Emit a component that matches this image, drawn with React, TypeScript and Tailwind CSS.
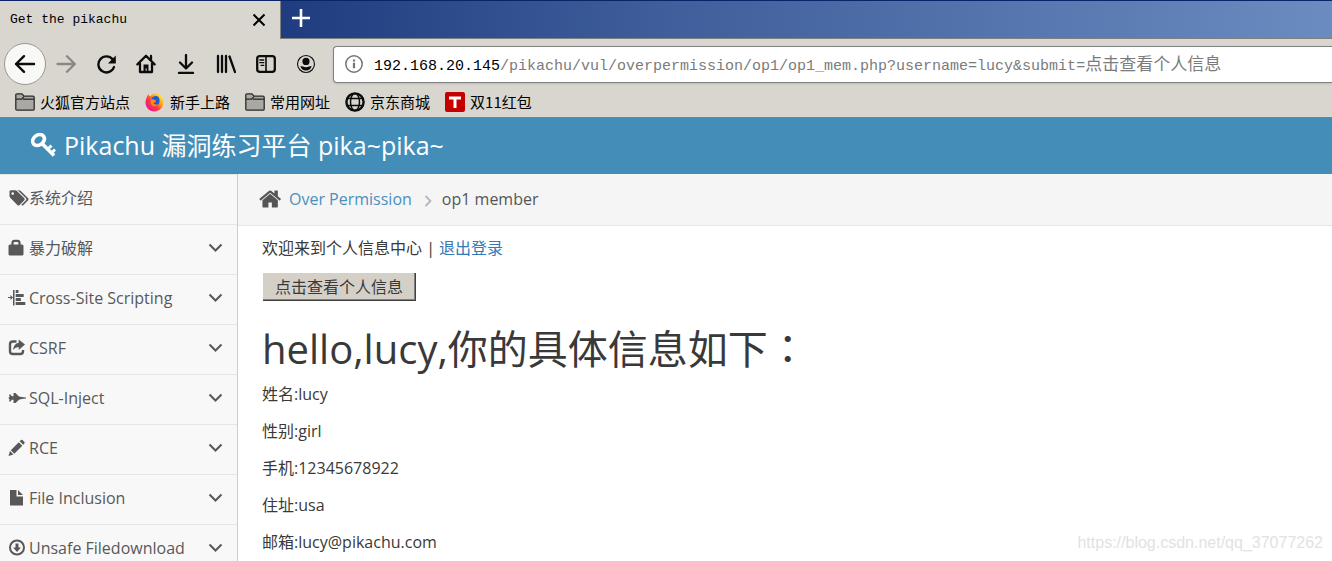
import type { ReactNode } from 'react';

const MENU: { label: string; icon: ReactNode; leaf?: boolean }[] = [
  { label: '系统介绍', icon: <TagsIcon />, leaf: true },
  { label: '暴力破解', icon: <LockIcon /> },
  { label: 'Cross-Site Scripting', icon: <AlignIcon /> },
  { label: 'CSRF', icon: <ShareIcon /> },
  { label: 'SQL-Inject', icon: <JetIcon /> },
  { label: 'RCE', icon: <PencilIcon /> },
  { label: 'File Inclusion', icon: <FileIcon /> },
  { label: 'Unsafe Filedownload', icon: <DownloadCircleIcon /> },
];

const BOOKMARKS = [
  { label: '火狐官方站点', icon: <FolderIcon /> },
  { label: '新手上路', icon: <FirefoxIcon /> },
  { label: '常用网址', icon: <FolderIcon /> },
  { label: '京东商城', icon: <GlobeIcon /> },
  { label: '双11红包', icon: <TmallIcon /> },
];

const MEMBER = [
  ['姓名', 'lucy'],
  ['性别', 'girl'],
  ['手机', '12345678922'],
  ['住址', 'usa'],
  ['邮箱', 'lucy@pikachu.com'],
];

export default function App() {
  return (
    <div className="relative flex h-screen flex-col overflow-hidden bg-white font-['Open_Sans','Noto_Sans_CJK_SC',sans-serif] text-base text-[#393939]">
      <BrowserChrome />
      <header className="flex h-14 shrink-0 items-center gap-2 bg-[#438eb9] px-[30px] pb-0.5 text-white">
        <KeyIcon />
        <a href="#" className="text-[25px] leading-8">Pikachu 漏洞练习平台 pika~pika~</a>
      </header>
      <div className="flex min-h-0 flex-1">
        <Sidebar />
        <Content />
      </div>
      <div className="absolute right-[9px] bottom-2 font-['Liberation_Sans',sans-serif] text-base leading-5 text-[#e2e2e2]">
        https://blog.csdn.net/qq_37077262
      </div>
    </div>
  );
}

function BrowserChrome() {
  return (
    <div className="shrink-0 border-b border-[#808080] bg-[#d9d6cf] font-['Liberation_Mono','Noto_Sans_CJK_SC',monospace] text-black">
      {/* Tab strip */}
      <div className="flex h-[39px] border-t border-[#0a246a] bg-linear-to-r from-[#0a246a] via-[#3f5e9b] to-[#6a8cc0]">
        <div className="flex w-[281px] items-center justify-between border-r border-[#808080] bg-[#d9d6cf] pr-3 pl-[10px]">
          <span className="text-[13px]">Get the pikachu</span>
          <button aria-label="Close tab">
            <svg width="18" height="18" viewBox="0 0 18 18" stroke="#000" strokeWidth="2" fill="none"><path d="M3.5 3.5l11 11M14.5 3.5l-11 11" /></svg>
          </button>
        </div>
        <div className="flex flex-1 items-center border-b border-[#808080] px-[10px] pb-1">
          <button aria-label="New tab">
            <svg width="20" height="20" viewBox="0 0 20 20" stroke="#fff" strokeWidth="2.6" fill="none"><path d="M10 1v18M1 10h18" /></svg>
          </button>
        </div>
      </div>

      {/* Navigation */}
      <div className="flex h-[50px] items-center pl-1">
        <NavIcons />
        <label className="ml-[7px] flex h-[37px] min-w-0 flex-1 items-center rounded-l-sm border border-r-0 border-[#808080] bg-white pl-[11px] shadow-sm">
          <svg width="18" height="18" viewBox="0 0 18 18" fill="none" stroke="#737373" strokeWidth="1.5" className="shrink-0">
            <circle cx="9" cy="9" r="8.2" />
            <path d="M9 7.8v5.4M9 4.4v2" strokeWidth="2.2" />
          </svg>
          <span className="ml-[11px] pt-1 text-[15px] whitespace-nowrap text-[#7b7b7b]">
            <span className="text-black">192.168.20.145</span>
            /pikachu/vul/overpermission/op1/op1_mem.php?username=lucy&amp;submit=
            <span className="text-[17px]">点击查看个人信息</span>
          </span>
        </label>
      </div>

      {/* Bookmarks */}
      <div className="flex h-7 items-center gap-[15px] pb-0.5 pl-[15px] font-['Noto_Sans_CJK_SC',sans-serif] text-[15px] leading-6">
        {BOOKMARKS.map(b => (
          <a key={b.label} href="#" className="flex items-center gap-[5px]">
            {b.icon}
            {b.label}
          </a>
        ))}
      </div>
    </div>
  );
}

function NavIcons() {
  return (
    <div className="flex items-center">
      <button aria-label="Back" className="flex size-[42px] items-center justify-center rounded-full border border-[#9a9893] bg-[#f8f8f7]">
        <svg width="22" height="20" viewBox="0 0 22 20" fill="none" stroke="#0c0c0d" strokeWidth="2.4" strokeLinecap="round" strokeLinejoin="round"><path d="M20 10H2M10 2.2L2 10l8 7.8" /></svg>
      </button>
      <NavButton label="Forward">
        <path d="M1.5 10h17M11 2.2l7.8 7.8-7.8 7.8" stroke="#8a8883" />
      </NavButton>
      <NavButton label="Reload">
        <path d="M16.8 5.6A8 8 0 1 0 18 13" />
        <path d="M19.8 1.6v7.9h-7.9z" fill="#0c0c0d" stroke="none" />
      </NavButton>
      <NavButton label="Home">
        <path d="M1.4 10.4L10 1.8l8.6 8.6M4 9.5V18h12V9.5M15 2v4" />
        <path d="M7.5 18v-7.5h5V18h-1.8v-3.5H9.6V18z" fill="#0c0c0d" stroke="none" />
      </NavButton>
      <NavButton label="Downloads">
        <path d="M10 1v13M4 8.5l6 6 6-6M3 19h14" />
      </NavButton>
      <NavButton label="Library">
        <path d="M2 2v16M6 2v16M10 2v16M13.5 2.5L19 18" />
      </NavButton>
      <NavButton label="Sidebar">
        <rect x="1.2" y="2.2" width="17.6" height="15.6" rx="2.6" />
        <path d="M10 2v16" strokeWidth="1.6" />
        <path d="M3.8 6h4M3.8 8.7h4M5 11.3h2.8" strokeWidth="1.3" />
      </NavButton>
      <NavButton label="Account">
        <circle cx="10" cy="10" r="8.5" strokeWidth="1.1" />
        <circle cx="10" cy="7.4" r="3.6" fill="#0c0c0d" stroke="none" />
        <path d="M4.4 12c2 0 3 1.2 5.6 1.2s3.6-1.2 5.6-1.2c-.5 3-3 4.6-5.600 4.600S4.900 15 4.400 12z" fill="#0c0c0d" stroke="none" />
      </NavButton>
    </div>
  );
}

function NavButton({ label, children }: { label: string; children: ReactNode }) {
  return (
    <button aria-label={label} className="flex size-10 items-center justify-center">
      <svg width="20" height="20" viewBox="0 0 20 20" fill="none" stroke="#0c0c0d" strokeWidth="2.3" strokeLinecap="round" strokeLinejoin="round">
        {children}
      </svg>
    </button>
  );
}

function Sidebar() {
  return (
    <nav className="w-[238px] shrink-0 border-r border-[#ccc] bg-[#f8f8f8] text-[#585858]">
      <ul className="border-t border-[#e5e5e5]">
        {MENU.map(item => (
          <li key={item.label} className="border-b border-[#e5e5e5]">
            <a href="#" className="flex h-[49px] items-center pr-[14px] pb-[3px] pl-2">
              <span className="flex w-[21px] shrink-0 items-center">{item.icon}</span>
              <span className="flex-1 whitespace-nowrap">{item.label}</span>
              {!item.leaf && (
                <svg width="15" height="10" viewBox="0 0 15 10" fill="none" stroke="currentColor" strokeWidth="2"><path d="M1.5 1.5l6 6 6-6" /></svg>
              )}
            </a>
          </li>
        ))}
      </ul>
    </nav>
  );
}

function Content() {
  return (
    <main className="min-w-0 flex-1">
      <div className="flex h-[52px] items-center border-b border-[#e5e5e5] bg-[#f5f5f5] pb-0.5 pl-[21px]">
        <svg width="24" height="24" viewBox="0 0 1792 1792" fill="#555" aria-hidden="true">
          <path d="M1408 992v480q0 26-19 45t-45 19h-384v-384h-256v384h-384q-26 0-45-19t-19-45v-480q0-1 .5-3t.5-3l575-474 575 474q1 2 1 6zm223-69l-62 74q-8 9-21 11h-3q-13 0-21-7l-692-577-692 577q-12 8-24 7-13-2-21-11l-62-74q-8-10-7-23.5t11-21.5l719-599q32-26 76-26t76 26l244 204v-195q0-14 9-23t23-9h192q14 0 23 9t9 23v408l219 182q10 8 11 21.5t-7 23.5z" />
        </svg>
        <a href="#" className="ml-1.5 text-[#4c8fbd]">Over Permission</a>
        <svg width="8" height="12" viewBox="0 0 8 12" fill="none" stroke="#b2b6bf" strokeWidth="1.8" className="mt-1 mr-[10px] ml-3"><path d="M1.5 1l5 5-5 5" /></svg>
        <span className="text-[#555]">op1 member</span>
      </div>
      <div className="px-6 pt-[10px]">
        <p>
          欢迎来到个人信息中心 | <a href="#" className="text-[#337ab7]">退出登录</a>
        </p>
        <button className="mt-[13px] ml-px block h-7 border-r border-b border-[#404040] bg-[#d4d0c8] px-3 pt-px leading-6 shadow-[inset_-1px_-1px_#808080]">
          点击查看个人信息
        </button>
        <h1 className="mt-[22px] text-[40px] leading-12">
          hello,lucy,你的具体信息如下<span lang="zh-TW" className="font-['Noto_Sans_CJK_TC',sans-serif]">：</span>
        </h1>
        <div className="mt-[9px] space-y-[13px]">
          {MEMBER.map(([name, value]) => (
            <p key={name}>{name}:{value}</p>
          ))}
        </div>
      </div>
    </main>
  );
}

function KeyIcon() {
  return (
    <svg width="26" height="26" viewBox="0 0 26 26" fill="none" stroke="#fff" aria-hidden="true">
      <ellipse cx="8.5" cy="8" rx="6.4" ry="5" strokeWidth="3.6" transform="rotate(-38 8.5 8)" />
      <path d="M12 11.5L24 23.5" strokeWidth="3.6" />
      <path d="M17.5 17.5l4-4M21.5 21l3.5-3.5" strokeWidth="3" />
    </svg>
  );
}

function TagsIcon() {
  return (
    <svg width="21" height="18" viewBox="0 0 2048 1792" fill="currentColor" className="shrink-0">
      <path d="M576 448q0-53-37.5-90.5t-90.5-37.5-90.5 37.5-37.5 90.5 37.5 90.5 90.5 37.5 90.5-37.5 37.5-90.5zm1067 576q0 53-37 90l-491 492q-39 37-91 37-53 0-90-37l-715-716q-38-37-64.5-101t-26.5-117v-416q0-52 38-90t90-38h416q53 0 117 26.5t102 64.5l715 714q37 39 37 91zm384 0q0 53-37 90l-491 492q-39 37-91 37-36 0-59-14t-53-45l470-470q37-37 37-90 0-52-37-91l-715-714q-38-38-102-64.5t-117-26.5h224q53 0 117 26.5t102 64.5l715 714q37 39 37 91z" />
    </svg>
  );
}

function MenuGlyph({ children }: { children: ReactNode }) {
  return <svg width="18" height="18" viewBox="0 0 18 18" fill="currentColor" className="shrink-0">{children}</svg>;
}

function LockIcon() {
  return (
    <MenuGlyph>
      <path d="M.5 7q0-1.500 1.500-1.500h12q1.500 0 1.500 1.500v8q0 1.500-1.500 1.500H2Q.5 16.500.5 15z" />
      <path d="M4.500 6V4q0-2.200 2-2.200h3q2 0 2 2.200v2" fill="none" stroke="currentColor" strokeWidth="2.2" />
    </MenuGlyph>
  );
}

function AlignIcon() {
  return (
    <MenuGlyph>
      <path d="M0 8h2.500V6L5 8.500 2.500 11V9H0zM5 1h1.500v15.500H5zM7.700 1h2.800v3H7.700zM7.700 5h8v3h-8zM7.700 9h5.200v3H7.700zM7.700 13h9.600v3H7.700z" />
    </MenuGlyph>
  );
}

function ShareIcon() {
  return (
    <MenuGlyph>
      <path d="M8.500 2.500H4.800Q2 2.500 2 5.300v7Q2 15 4.800 15h7.400q2.800 0 2.800-2.800V11" fill="none" stroke="currentColor" strokeWidth="2.4" />
      <path d="M10.700.5l6.300 5-6.300 5.500V8Q7.500 8 5 11q.7-6.500 5.700-7.300z" />
    </MenuGlyph>
  );
}

function JetIcon() {
  return (
    <MenuGlyph>
      <path d="M1 5.500h1.400L4 7.300h1.500V4h2l3.500 3.500 2.500.6L18 8.600v1l-4.500.5-2.500.6L7.500 14h-2v-3.200H4l-1.600 1.800H1l.7-2.400H.8V8h.9z" />
    </MenuGlyph>
  );
}

function PencilIcon() {
  return (
    <MenuGlyph>
      <path d="M.5 17l1.500-5 3.500 3.500zM2.800 11.200l8-8 3.500 3.500-8 8zM11.700 2.300l1.200-1.200q.8-.7 1.600 0l1.900 1.900q.7.800 0 1.600l-1.200 1.200z" />
    </MenuGlyph>
  );
}

function FileIcon() {
  return (
    <MenuGlyph>
      <path d="M2 1h6.500v6.500H15v9H2zM10 1l5 5h-5z" />
    </MenuGlyph>
  );
}

function DownloadCircleIcon() {
  return (
    <MenuGlyph>
      <circle cx="9" cy="8.5" r="7" fill="none" stroke="currentColor" strokeWidth="2" />
      <path d="M7.500 4.500h3v4H13l-4 4.500-4-4.500h2.500z" />
    </MenuGlyph>
  );
}

function FolderIcon() {
  return (
    <svg width="20" height="18" viewBox="0 0 20 18" fill="#aaa8a3" stroke="#2b2b2b" strokeWidth="1.3" strokeLinejoin="round">
      <path d="M.8 2q0-1.200 1.200-1.200h5l2 2.400h9q1.200 0 1.200 1.200v11.600q0 1.200-1.200 1.200H2Q.8 17.200.8 16z" />
      <path d="M1 6.200h5.500L9 3.600" fill="none" />
      <path d="M8 6.200h11" />
    </svg>
  );
}

function FirefoxIcon() {
  return (
    <svg width="20" height="20" viewBox="0 0 20 20">
      <defs>
        <linearGradient id="fox" x1="0.9" y1="0.1" x2="0.15" y2="0.85">
          <stop offset="0" stopColor="#fff44f" />
          <stop offset="0.35" stopColor="#ffa31a" />
          <stop offset="0.65" stopColor="#ff3b3f" />
          <stop offset="1" stopColor="#e81a8c" />
        </linearGradient>
      </defs>
      <path d="M2 4.500L3.500 2l.8 2.200 2-.6C8 1.500 9 1.800 11 1.500L13 .5c1 1.800 3 2.500 4.500 5 3 6-1 14-8 14C3 19.500-1 13 1 7.500z" fill="url(#fox)" />
      <path d="M6.500 6.500C8 3.500 12.500 3 14 6c1.500 3.500 0 7.500-3.500 8-2.500.2-4.500-1-4.500-3l3 .2 2-1.700-2.500-.7L7.300 8z" fill="#1d5bd0" />
      <path d="M6 7.500l2.500-.3 2.500 1.500-1 1.500-2 .5 1.500 1.500c2 .8 3 0 3.500-.7-.5 2-2.500 3-4.500 2.500C6 13.500 5 10.500 6 7.500z" fill="#ff8a16" />
    </svg>
  );
}

function GlobeIcon() {
  return (
    <svg width="20" height="20" viewBox="0 0 20 20" fill="none" stroke="#0c0c0d">
      <circle cx="10" cy="10" r="8.6" strokeWidth="2.4" />
      <ellipse cx="10" cy="10" rx="4.5" ry="8.6" strokeWidth="1.5" />
      <path d="M3 6.500h14M3 13.500h14" strokeWidth="1.3" />
    </svg>
  );
}

function TmallIcon() {
  return (
    <svg width="20" height="20" viewBox="0 0 20 20">
      <rect width="20" height="20" rx="2" fill="#c40000" />
      <path d="M4 4.500h12v3h-4.500V16h-3V7.500H4z" fill="#fff" />
    </svg>
  );
}
